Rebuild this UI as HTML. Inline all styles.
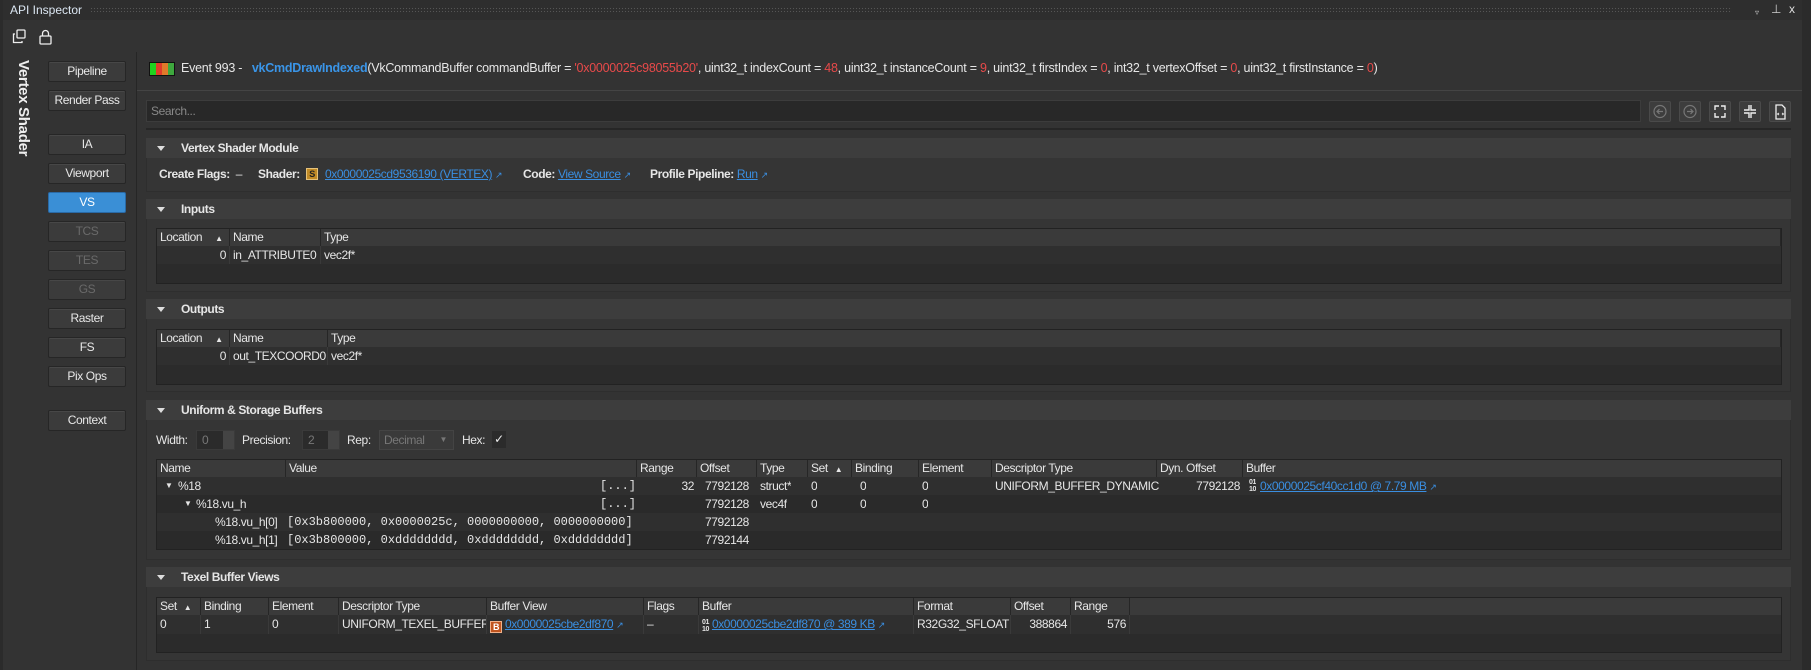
<!DOCTYPE html>
<html><head><meta charset="utf-8"><style>
*{box-sizing:border-box;margin:0;padding:0}
body{width:1811px;height:670px;background:#2b2b2b;font-family:"Liberation Sans",sans-serif;font-size:12px;letter-spacing:-0.4px;color:#e6e6e6;position:relative;overflow:hidden}
.a{position:absolute}
.btn{position:absolute;left:48px;width:78px;height:21px;background:#3b3b3b;border:1px solid #262626;border-radius:2px;text-align:center;line-height:19px;color:#e8e8e8;font-size:12px;box-shadow:inset 0 1px 0 #474747}
.dis{color:#6a6a6a}
.sh{position:absolute;left:146px;width:1645px;height:20px;background:#3d3d3d;font-weight:bold;line-height:20px;padding-left:35px;font-size:12px}
.sh:before{content:"";position:absolute;left:11px;top:8px;border-left:4px solid transparent;border-right:4px solid transparent;border-top:5px solid #ddd}
.sb{position:absolute;left:146px;width:1645px;background:#353535;border:1px solid #2e2e2e;border-top:none}
.tb{position:absolute;left:156px;width:1626px;background:#2b2b2b;border:1px solid #222}
.row{position:absolute;left:0;right:0;height:18px;line-height:18px}
.hd{background:#3a3a3a;height:17px;line-height:17px}
.c{position:absolute;top:0;height:100%;padding-left:3px;white-space:nowrap;overflow:hidden}
.hd .c{border-right:1px solid #262626}
.r .c{border-right:1px solid #3a3a3a}
.lk{color:#3a8ee0;text-decoration:underline}
.ar{color:#3a8ee0;font-size:9px}
.rd{color:#e84a4a}
.mono{font-family:"Liberation Mono",monospace;font-size:12px;letter-spacing:0}
.ib{position:absolute;top:101px;width:22px;height:21px;background:#3d3d3d;border:1px solid #4a4a4a;border-radius:2px}
</style></head><body>
<div class="a" style="left:3px;top:0;width:1799px;height:670px;background:#333"></div>
<div class="a" style="left:3px;top:0;width:1799px;height:20px;background:#2e2e2e"></div>
<div class="a" style="left:10px;top:3px;color:#dbe6f2;font-size:12px;letter-spacing:0">API Inspector</div>
<div class="a" style="left:90px;top:7px;width:1642px;height:6px;background-image:radial-gradient(#555 0.6px,transparent 0.8px);background-size:3px 3px"></div>
<div class="a" style="left:1755px;top:8px;color:#ccc;font-size:8px">▿</div>
<div class="a" style="left:1771px;top:2px;color:#ccc;font-size:12px">⊥</div>
<div class="a" style="left:1789px;top:2px;color:#ddd;font-size:12px">x</div>
<svg class="a" style="left:12px;top:29px" width="40" height="16" viewBox="0 0 40 16" fill="none" stroke="#eee" stroke-width="1.3"><rect x="5" y="1" width="8" height="8" rx="1"/><path d="M3 5H1.5v8.5H10V12"/><rect x="28" y="7" width="11" height="8" rx="1"/><path d="M30.5 7V4.5a3 3 0 0 1 6 0V7"/></svg>
<div class="a" style="left:136px;top:52px;width:1px;height:618px;background:#262626"></div>
<div class="a" style="left:14px;top:60px;width:20px;height:100px;"><div style="transform:rotate(90deg);transform-origin:0 0;position:absolute;left:18px;top:0;white-space:nowrap;font-weight:bold;font-size:15px;color:#eee;letter-spacing:-0.3px">Vertex Shader</div></div>
<div class="btn" style="top:61px">Pipeline</div>
<div class="btn" style="top:90px">Render Pass</div>
<div class="btn" style="top:134px">IA</div>
<div class="btn" style="top:163px">Viewport</div>
<div class="btn" style="top:192px;background:#3a8fd6;border-color:#2a6aa6;box-shadow:none;color:#fff">VS</div>
<div class="btn dis" style="top:221px">TCS</div>
<div class="btn dis" style="top:250px">TES</div>
<div class="btn dis" style="top:279px">GS</div>
<div class="btn" style="top:308px">Raster</div>
<div class="btn" style="top:337px">FS</div>
<div class="btn" style="top:366px">Pix Ops</div>
<div class="btn" style="top:410px">Context</div>
<div class="a" style="left:149px;top:62px;width:26px;height:14px;border:1px solid #111;background:linear-gradient(90deg,#1fd21f 0 25%,#e03b2a 25% 50%,#e07a2a 50% 75%,#3ea83e 75%)"></div>
<div class="a" style="left:181px;top:61px;white-space:nowrap;font-size:12.5px;letter-spacing:-0.25px">Event 993 - &nbsp;&nbsp;<span style="color:#3a95e8;font-weight:bold">vkCmdDrawIndexed</span>(VkCommandBuffer commandBuffer = <span class="rd">'0x0000025c98055b20'</span>, uint32_t indexCount = <span class="rd">48</span>, uint32_t instanceCount = <span class="rd">9</span>, uint32_t firstIndex = <span class="rd">0</span>, int32_t vertexOffset = <span class="rd">0</span>, uint32_t firstInstance = <span class="rd">0</span>)</div>
<div class="a" style="left:137px;top:90px;width:1665px;height:1px;background:#444"></div>
<div class="a" style="left:146px;top:100px;width:1495px;height:22px;background:#282828;border:1px solid #3c3c3c;color:#888;line-height:20px;padding-left:4px">Search...</div>
<div class="ib" style="left:1649px"><svg width="20" height="19"><circle cx="10" cy="9.5" r="6" fill="none" stroke="#777" stroke-width="1.2"/><path d="M13 9.5H7M9.5 7L7 9.5 9.5 12" fill="none" stroke="#777" stroke-width="1.2"/></svg></div>
<div class="ib" style="left:1679px"><svg width="20" height="19"><circle cx="10" cy="9.5" r="6" fill="none" stroke="#777" stroke-width="1.2"/><path d="M7 9.5H13M10.5 7L13 9.5 10.5 12" fill="none" stroke="#777" stroke-width="1.2"/></svg></div>
<div class="ib" style="left:1709px"><svg width="20" height="19" fill="none" stroke="#eee" stroke-width="1.4"><path d="M5 8V4h4M11 4h4v4M15 11v4h-4M9 15H5v-4"/></svg></div>
<div class="ib" style="left:1739px"><svg width="20" height="19" fill="none" stroke="#eee" stroke-width="1.4"><path d="M9 3v5H4M11 3v5h5M16 11h-5v5M4 11h5v5"/></svg></div>
<div class="ib" style="left:1769px"><svg width="20" height="19" fill="none" stroke="#eee" stroke-width="1.3"><path d="M6 3h6l3 3v11H6z"/><path d="M9 11l-1.5 1L9 13M12 11l1.5 1L12 13" stroke-width="1"/></svg></div>
<div class="a" style="left:146px;top:128px;width:1645px;height:2px;background:#262626"></div>
<div class="sh" style="top:138px">Vertex Shader Module</div>
<div class="sb" style="top:158px;height:34px"></div>
<div class="a" style="left:159px;top:167px;white-space:nowrap"><b>Create Flags:</b> &nbsp;– </div>
<div class="a" style="left:258px;top:167px;white-space:nowrap"><b>Shader:</b></div>
<div class="a" style="left:306px;top:168px;width:12px;height:12px;background:#c08a26;border:1px solid #e6c27a;color:#222;font-size:9px;line-height:10px;text-align:center;font-weight:bold">S</div>
<div class="a" style="left:325px;top:167px;white-space:nowrap"><span class="lk">0x0000025cd9536190 (VERTEX)</span> <span class="ar">↗</span></div>
<div class="a" style="left:523px;top:167px;white-space:nowrap"><b>Code:</b> <span class="lk">View Source</span> <span class="ar">↗</span></div>
<div class="a" style="left:650px;top:167px;white-space:nowrap"><b>Profile Pipeline:</b> <span class="lk">Run</span> <span class="ar">↗</span></div>
<div class="sh" style="top:199px">Inputs</div>
<div class="sb" style="top:219px;height:73px"></div>
<div class="tb" style="top:228px;height:56px">
 <div class="row hd" style="top:0"><div class="c" style="left:0;width:73px">Location <span style="font-size:8px;margin-left:10px">▲</span></div><div class="c" style="left:73px;width:91px">Name</div><div class="c" style="left:164px;right:0">Type</div></div>
 <div class="row r" style="top:17px;background:#2f2f2f"><div class="c" style="left:0;width:73px;text-align:right;padding-right:3px">0</div><div class="c" style="left:73px;width:91px">in_ATTRIBUTE0</div><div class="c" style="left:164px;right:0;border:none">vec2f*</div></div>
</div>
<div class="sh" style="top:299px">Outputs</div>
<div class="sb" style="top:319px;height:73px"></div>
<div class="tb" style="top:329px;height:56px">
 <div class="row hd" style="top:0"><div class="c" style="left:0;width:73px">Location <span style="font-size:8px;margin-left:10px">▲</span></div><div class="c" style="left:73px;width:98px">Name</div><div class="c" style="left:171px;right:0">Type</div></div>
 <div class="row r" style="top:17px;background:#2f2f2f"><div class="c" style="left:0;width:73px;text-align:right;padding-right:3px">0</div><div class="c" style="left:73px;width:98px">out_TEXCOORD0</div><div class="c" style="left:171px;right:0;border:none">vec2f*</div></div>
</div>
<div class="sh" style="top:400px">Uniform &amp; Storage Buffers</div>
<div class="sb" style="top:420px;height:140px"></div>
<div class="a" style="left:156px;top:433px">Width:</div>
<div class="a" style="left:196px;top:430px;width:39px;height:20px;background:#2b2b2b;border:1px solid #3a3a3a;color:#777;padding-left:5px;line-height:18px">0<span style="position:absolute;right:0;top:0;width:11px;height:18px;background:#444"></span></div>
<div class="a" style="left:242px;top:433px">Precision:</div>
<div class="a" style="left:302px;top:430px;width:38px;height:20px;background:#2b2b2b;border:1px solid #3a3a3a;color:#777;padding-left:5px;line-height:18px">2<span style="position:absolute;right:0;top:0;width:11px;height:18px;background:#444"></span></div>
<div class="a" style="left:347px;top:433px">Rep:</div>
<div class="a" style="left:379px;top:430px;width:75px;height:20px;background:#3a3a3a;border:1px solid #444;color:#777;padding-left:4px;line-height:18px">Decimal<span style="position:absolute;right:6px;top:0;font-size:8px">▼</span></div>
<div class="a" style="left:462px;top:433px">Hex:</div>
<div class="a" style="left:492px;top:431px;width:14px;height:17px;background:#2b2b2b;text-align:center;line-height:17px;color:#eee">✓</div>
<div class="tb" style="top:459px;height:91px">
 <div class="row hd" style="top:0">
  <div class="c" style="left:0;width:129px">Name</div><div class="c" style="left:129px;width:351px">Value</div><div class="c" style="left:480px;width:60px">Range</div><div class="c" style="left:540px;width:60px">Offset</div><div class="c" style="left:600px;width:51px">Type</div><div class="c" style="left:651px;width:44px">Set <span style="font-size:8px;margin-left:4px">▲</span></div><div class="c" style="left:695px;width:67px">Binding</div><div class="c" style="left:762px;width:73px">Element</div><div class="c" style="left:835px;width:165px">Descriptor Type</div><div class="c" style="left:1000px;width:86px">Dyn. Offset</div><div class="c" style="left:1086px;right:0;border:none">Buffer</div></div>
 <div class="row" style="top:17px;background:#2f2f2f">
  <div class="c" style="left:5px;font-size:8px">▼</div><div class="c" style="left:18px">%18</div><div class="c mono" style="left:440px">[...]</div><div class="c" style="left:480px;width:60px;text-align:right;padding-right:3px">32</div><div class="c" style="left:545px">7792128</div><div class="c" style="left:600px">struct*</div><div class="c" style="left:651px">0</div><div class="c" style="left:700px">0</div><div class="c" style="left:762px">0</div><div class="c" style="left:835px">UNIFORM_BUFFER_DYNAMIC</div><div class="c" style="left:1000px;width:86px;text-align:right;padding-right:3px">7792128</div><div class="c" style="left:1089px;font-size:7px;line-height:7px;top:2px;font-weight:bold">01<br>10</div><div class="c" style="left:1100px"><span class="lk">0x0000025cf40cc1d0 @ 7.79 MB</span> <span class="ar">↗</span></div></div>
 <div class="row" style="top:35px;background:#2a2a2a">
  <div class="c" style="left:24px;font-size:8px">▼</div><div class="c" style="left:36px">%18.vu_h</div><div class="c mono" style="left:440px">[...]</div><div class="c" style="left:545px">7792128</div><div class="c" style="left:600px">vec4f</div><div class="c" style="left:651px">0</div><div class="c" style="left:700px">0</div><div class="c" style="left:762px">0</div></div>
 <div class="row" style="top:53px;background:#2f2f2f">
  <div class="c" style="left:55px">%18.vu_h[0]</div><div class="c mono" style="left:127px">[0x3b800000, 0x0000025c, 0000000000, 0000000000]</div><div class="c" style="left:545px">7792128</div></div>
 <div class="row" style="top:71px;background:#2a2a2a">
  <div class="c" style="left:55px">%18.vu_h[1]</div><div class="c mono" style="left:127px">[0x3b800000, 0xdddddddd, 0xdddddddd, 0xdddddddd]</div><div class="c" style="left:545px">7792144</div></div>
</div>
<div class="sh" style="top:567px">Texel Buffer Views</div>
<div class="sb" style="top:587px;height:74px"></div>
<div class="tb" style="top:597px;height:56px">
 <div class="row hd" style="top:0">
  <div class="c" style="left:0;width:44px">Set <span style="font-size:8px;margin-left:4px">▲</span></div><div class="c" style="left:44px;width:68px">Binding</div><div class="c" style="left:112px;width:70px">Element</div><div class="c" style="left:182px;width:148px">Descriptor Type</div><div class="c" style="left:330px;width:157px">Buffer View</div><div class="c" style="left:487px;width:55px">Flags</div><div class="c" style="left:542px;width:215px">Buffer</div><div class="c" style="left:757px;width:97px">Format</div><div class="c" style="left:854px;width:60px">Offset</div><div class="c" style="left:914px;width:59px">Range</div></div>
 <div class="row r" style="top:17px;height:19px;background:#2f2f2f">
  <div class="c" style="left:0;width:44px">0</div><div class="c" style="left:44px;width:68px">1</div><div class="c" style="left:112px;width:70px">0</div><div class="c" style="left:182px;width:148px">UNIFORM_TEXEL_BUFFER</div><div class="c" style="left:330px;width:157px"><span style="display:inline-block;width:12px;height:12px;background:#c0541e;border:1px solid #f0b08a;color:#fff;font-size:9px;line-height:10px;text-align:center;font-weight:bold;vertical-align:-2px">B</span> <span class="lk">0x0000025cbe2df870</span> <span class="ar">↗</span></div><div class="c" style="left:487px;width:55px">–</div><div class="c" style="left:542px;width:215px"><span style="display:inline-block;font-size:7px;line-height:7px;font-weight:bold;vertical-align:-3px">01<br>10</span> <span class="lk">0x0000025cbe2df870 @ 389 KB</span> <span class="ar">↗</span></div><div class="c" style="left:757px;width:97px">R32G32_SFLOAT</div><div class="c" style="left:854px;width:60px;text-align:right;padding-right:3px">388864</div><div class="c" style="left:914px;width:59px;text-align:right;padding-right:3px">576</div></div>
</div>
</body></html>
